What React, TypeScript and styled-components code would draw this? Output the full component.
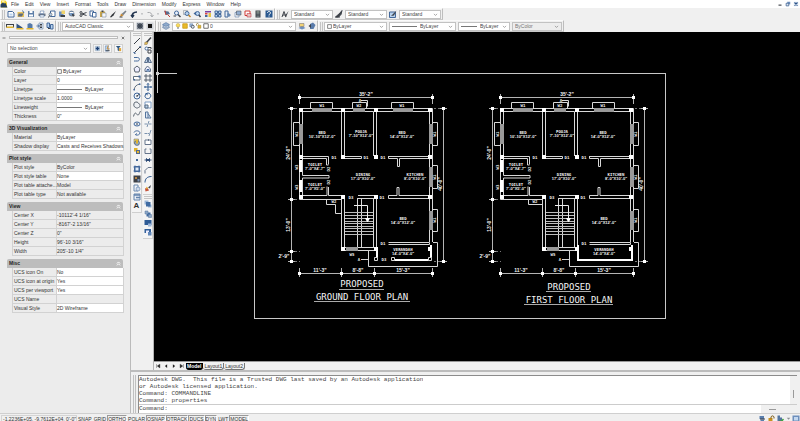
import React from 'react';
import styled, { createGlobalStyle, css } from 'styled-components';

const UI = "'Liberation Sans', 'Open Sans', sans-serif";
const MONO = "'Liberation Mono', 'DejaVu Sans Mono', monospace";

const Global = createGlobalStyle`
  * { box-sizing: border-box; }
  body { margin: 0; background: #f0f0f0; }
  button, select, input { font: inherit; color: inherit; margin: 0; padding: 0; border: 0; background: none; border-radius: 0; outline: none; }
`;

/* ---------- icons ---------- */

const B = '#44699b';
const D = '#3c4148';
const Y = '#e3b52f';
const L = '#b9d3ee';

const icons: Record<string, React.ReactNode> = {
  app: (<><path d="M2 1h9l3 4v10H2z" fill="#f0cf30" /><path d="M1 9l5-5 2 3 3-1 4 9H1z" fill="#28415f" /><path d="M4 2h5v3H4z" fill="#fff3a0" /></>),
  fresh: (<><path d="M2 3h9l3 3v8H2z" fill="#fff" stroke={B} strokeWidth="2" /><path d="M5 7h6v4H5z" fill={L} /></>),
  open: (<><path d="M1 4h13v10H1z" fill="#e9c35a" /><path d="M3 7h10l-3 6H2z" fill="#5f6d80" /><path d="M11 1l3 5" stroke={B} strokeWidth="2" /></>),
  save: (<><path d="M2 2h12v12H2z" fill="#5d7ea8" /><path d="M5 2h6v4H5zM4 9h8v4H4z" fill="#fff" /></>),
  print: (<><path d="M1 7h14v5H1z" fill="#707b8a" /><path d="M5 2h7l-1 5H4zM4 10h8v4H4z" fill="#fff" stroke={B} /></>),
  preview: (<><path d="M5 2h9v11H5z" fill="#fff" stroke={B} strokeWidth="2" /><circle cx="5" cy="9" r="3" fill={L} stroke={D} /><path d="M3 11l-2 4" stroke={D} strokeWidth="2" /></>),
  publish: (<><path d="M2 3h9v10H2z" fill="#6b8fbd" /><path d="M7 1h7v7H7z" fill="#f0d36a" /><path d="M5 10h9v4H5z" fill={D} /></>),
  globe: (<><circle cx="7" cy="7" r="5" fill="#7da1cc" stroke={D} /><path d="M7 7l7 3-4 4z" fill={D} /><path d="M3 5h8" stroke="#fff" strokeWidth="2" /></>),
  cut: (<><path d="M6 8L15 5M6 8l9 3" stroke={D} strokeWidth="2" /><circle cx="4" cy="5" r="2" fill="none" stroke={D} strokeWidth="2" /><circle cx="4" cy="11" r="2" fill="none" stroke={D} strokeWidth="2" /></>),
  copy: (<><path d="M2 2h7v10H2z" fill="#fff" stroke={B} strokeWidth="2" /><path d="M7 5h7v9H7z" fill="#fff" stroke={B} strokeWidth="2" /></>),
  paste: (<><path d="M2 3h10v11H2z" fill="#c9a548" /><path d="M5 1h4v3H5z" fill={D} /><path d="M6 6h8v8H6z" fill="#f6f7fa" stroke="#66768c" /></>),
  match: <path d="M2 14l4-5 8-7-5 9-5 4z" fill="#2f3237" />,
  brush: (<><path d="M13 1l2 2-7 8-3-3z" fill="#7a8088" /><path d="M2 14l2-7 5 4z" fill="#c98a32" /><path d="M1 14h6" stroke={D} strokeWidth="2" /></>),
  undo: <path d="M5 14C3 8 7 4 14 4M2 10l3 4 3-4" fill="none" stroke="#22344f" strokeWidth="3" />,
  redo: <path d="M3 5c6-1 9 2 9 7M9 10l3 4 3-4" fill="none" stroke="#a7a9ac" strokeWidth="2" />,
  drop: <path d="M4 6h8l-4 5z" fill="#8a8d92" />,
  pan: (<><path d="M2 2l4 8 8-2-3-5z" fill="#556f92" /><path d="M4 1l2 9M9 9l5 5" stroke="#c43d33" strokeWidth="2" /></>),
  zoom: (<><circle cx="7" cy="6" r="4" fill="#e8f0fa" stroke={B} strokeWidth="2" /><path d="M10 9l5 5" stroke={D} strokeWidth="3" /><path d="M1 12h5" stroke={D} strokeWidth="2" /></>),
  zoomWin: (<><path d="M1 1h8v8H1z" fill="none" stroke="#7a8088" /><circle cx="8" cy="7" r="4" fill={L} stroke={B} strokeWidth="2" /><path d="M11 10l4 4" stroke="#b98024" strokeWidth="3" /></>),
  zoomPrev: (<><circle cx="9" cy="7" r="4" fill={L} stroke={B} strokeWidth="2" /><path d="M12 10l3 4" stroke={D} strokeWidth="3" /><path d="M1 7l5-4v8z" fill={B} /></>),
  props: (<><path d="M2 2h12v3H2z" fill="#7b3fa0" /><path d="M2 6h5v3H2z" fill="#d84343" /><path d="M9 6h5v8H9z" fill="#e4c342" /><path d="M2 10h5v4H2z" fill={B} /></>),
  center: (<path d="M2 2h5v5H2zM9 2h5v5H9zM2 9h5v5H2zM9 9h5v5H9z" fill={L} stroke={B} strokeWidth="2" />),
  palette: (<><path d="M2 2h6v12H2z" fill="#e6edf6" stroke={B} strokeWidth="2" /><path d="M8 5l6 5-4 4-4-4z" fill="#6688b3" /></>),
  sheet: (<><path d="M2 5h8v9H2z" fill="#eef2f8" stroke={B} /><path d="M5 2h9v8H5z" fill="#93aed0" stroke={D} /></>),
  markup: (<><path d="M2 2h10v9H2z" fill="#fff" stroke="#d33b34" strokeWidth="2" /><path d="M6 7h8v7H6z" fill="#e7c2c0" stroke="#b23" /></>),
  calc: (<><path d="M3 1h10v14H3z" fill="#3e444c" /><path d="M5 3h6v2H5z" fill="#b5c6b4" /><path d="M5 7h6M5 10h6M5 13h6" stroke="#9aa" strokeWidth="1" /></>),
  help: (<><path d="M1 1h14v14H1z" fill="#2a588f" /><path d="M5 6c0-4 6-4 6 0 0 2-3 2-3 4M8 11v2" fill="none" stroke="#fff" strokeWidth="2" /></>),
  textstyle: (<><path d="M2 14L6 3l4 11M4 10h5" fill="none" stroke={D} strokeWidth="2" /><path d="M15 2l-4 10-3 3 1-5z" fill={D} /></>),
  dimstyle: <path d="M1 14h9M1 14l9-8 4-5-2 8-5 5z" fill={D} stroke={D} strokeWidth="2" />,
  tablestyle: (<><path d="M1 4h12v11H1z" fill={L} stroke={B} strokeWidth="2" /><path d="M15 1l-8 8-3 3 6-1z" fill={D} /></>),
  dist: (<><path d="M1 4v7M15 4v7M1 5h14" stroke={D} strokeWidth="2" /><path d="M1 9h14v3H1z" fill={Y} /></>),
  area: (<><path d="M1 13V3l12 8v2z" fill="#33547f" /><path d="M1 12h14v3H1z" fill={Y} /></>),
  region: (<><path d="M3 4l5-2 5 3v7H3z" fill="#5479a8" /><path d="M1 12h14v3H1z" fill={Y} /></>),
  list: (<><path d="M6 2h8v12H6z" fill="#e8eef6" stroke={B} /><path d="M8 5h4M8 8h4M8 11h4" stroke={D} strokeWidth="2" /><path d="M1 8h5M4 5l3 3-3 3" stroke={B} strokeWidth="2" fill="none" /></>),
  locate: (<><path d="M2 2h5v9H2zM9 5h5v9H9z" fill={L} stroke={B} strokeWidth="2" /><path d="M4 13h4" stroke={D} strokeWidth="2" /></>),
  gear: (<><path d="M1 1h14v14H1z" fill="#b7bdc6" /><circle cx="8" cy="8" r="4" fill="none" stroke="#3a4350" strokeWidth="3" /><path d="M3 3l10 10M13 3L3 13" stroke="#3a4350" strokeWidth="2" /></>),
  chip: (<><path d="M1 1h14v14H1z" fill="#d0d3d8" /><path d="M4 4h8v8H4z" fill="#141414" /></>),
  layers: (<><path d="M1 11l7-4 7 4-7 4z" fill="#b9c6d6" stroke={B} /><path d="M1 8l7-4 7 4-7 4z" fill="#d9e2ec" stroke={B} /><path d="M1 5l7-4 7 4-7 4z" fill="#8faacb" stroke={B} /></>),
  bulb: (<><circle cx="8" cy="6" r="5" fill="#f9dc5c" stroke="#a98a2c" /><path d="M6 11h4v4H6z" fill="#7a7f87" /></>),
  sun: (<path d="M2 2h12v12H2z" fill="#e8b928" stroke="#c99510" strokeWidth="2" />),
  freeze: (<><path d="M2 2h8v8H2z" fill="#9db7d8" stroke={B} /><circle cx="10" cy="10" r="4" fill="#dfe8f2" stroke={D} strokeWidth="2" /></>),
  lock: (<><path d="M1 7V3c2-3 5-2 6 1" fill="none" stroke="#8a6d1e" strokeWidth="2" /><path d="M5 6h8v8H5z" fill={Y} stroke="#8a6d1e" /></>),
  swatch: <path d="M2 2h12v12H2z" fill="#fff" stroke="#444" strokeWidth="2" />,
  layPrev: (<><path d="M1 12l7-4 7 4-7 3z" fill="#6f90bd" /><path d="M3 3h9v6H3z" fill="#f1d274" stroke="#667" /></>),
  layState: (<><path d="M4 4l6-3 5 5-4 8H4z" fill="#5a7cab" /><path d="M1 8l5-4v8z" fill={D} /></>),
  pick: (<><path d="M3 3h10v10H3z" fill={L} stroke="#89a" /><path d="M8 4v8M4 8h8" stroke="#1f3f70" strokeWidth="3" /></>),
  pickObj: (<><path d="M3 2h7v12H3z" fill={L} stroke={B} /><path d="M10 1l-3 8h6" fill="none" stroke="#d08a2a" strokeWidth="2" /><path d="M4 13h9" stroke={D} strokeWidth="2" /></>),
  quick: (<><path d="M2 2h11l-4 5v7l-3-2V7z" fill="#31577f" /><path d="M9 7h5v7H9z" fill="#e0a63a" /></>),
  line: <path d="M2 14L14 2" stroke={D} strokeWidth="2" />,
  xline: (<><path d="M2 14L14 2" stroke={D} strokeWidth="2" /><path d="M1 13h3v3M13 1h2v3" fill={D} stroke={B} strokeWidth="2" /></>),
  pline: <path d="M2 5h7c5 0 5 7 0 7H5M2 12h3" fill="none" stroke={B} strokeWidth="2" />,
  polygon: <path d="M8 2l6 5-2 7H4L2 7z" fill="#eef" stroke="#5a6470" strokeWidth="2" />,
  rect: (<><path d="M1 5h13v7H1z" fill="#fff" stroke="#62707f" strokeWidth="2" /><path d="M11 3h4v4h-4zM1 10h3v3H1z" fill={B} /></>),
  arc: (<><path d="M2 14C3 7 7 3 14 2" fill="none" stroke="#62707f" strokeWidth="2" /><path d="M1 12h3v3H1zM12 1h3v3h-3z" fill={B} /></>),
  circle: (<><circle cx="8" cy="8" r="6" fill="#eef3f9" stroke={B} strokeWidth="2" /><path d="M8 8l5-4M6 8h4" stroke={D} strokeWidth="2" /></>),
  cloud: <path d="M3 3c4-2 7-1 8 2 4 0 4 8 0 8-3 2-5 1-7-1-3 0-3-6-1-9z" fill="#eef0f3" stroke="#5a6470" strokeWidth="2" />,
  spline: <path d="M1 13c3-12 6-5 8-3s4-4 6-8" fill="none" stroke="#5a6470" strokeWidth="2" />,
  ellipse: (<><ellipse cx="8" cy="8" rx="6" ry="4" fill="#e7eef7" stroke={B} strokeWidth="2" /><path d="M6 8h4" stroke={D} strokeWidth="2" /></>),
  earc: <path d="M2 7c2-5 12-4 12 1 0 3-5 5-8 4M4 12l4-3" fill="none" stroke={B} strokeWidth="2" />,
  insert: (<><path d="M2 2h9v9H2z" fill="#e6d46f" stroke="#667" /><circle cx="8" cy="10" r="5" fill="#8fa9c8" stroke={D} /><path d="M6 4h4v7H6z" fill={Y} /></>),
  block: (<><path d="M2 2h7v7H2z" fill={Y} /><path d="M6 6h8v8H6z" fill="#55698a" /><path d="M8 8h4v4H8z" fill={Y} /></>),
  point: <path d="M6 6h4v4H6z" fill={B} />,
  hatch: (<><path d="M3 3h10v10H3z" fill="#e3ecf7" stroke={B} strokeWidth="2" /><path d="M1 4h14M1 12h14M4 1v14M12 1v14" stroke={B} strokeWidth="2" /></>),
  gradient: (<><path d="M1 1h14v14H1z" fill="#3d4046" /><path d="M4 4h4v4H4z" fill="#b98745" /><path d="M9 8h4v5H9z" fill="#7991b3" /></>),
  regionV: (<><path d="M2 2h8v12H2z" fill="#eef2f8" stroke="#6f8cb0" strokeWidth="2" /><circle cx="10" cy="10" r="4" fill="#cfdcec" stroke={B} /></>),
  table: (<><path d="M2 2h12v12H2z" fill="#e8eef6" stroke="#6484ad" strokeWidth="2" /><path d="M2 4h12M6 9h8" stroke="#6484ad" strokeWidth="3" /></>),
  erase: (<><path d="M14 1L5 11" stroke={D} strokeWidth="3" /><path d="M2 10l6 1-2 4H1z" fill="#e6bd54" stroke="#875" /></>),
  copyM: (<><circle cx="5" cy="5" r="3" fill="#fff" stroke={B} strokeWidth="2" /><path d="M8 8h6v6H8zM8 3h6v3" fill="#fff" stroke={D} strokeWidth="2" /></>),
  mirror: <path d="M7 2v11H1zM9 2v11h6z" fill="#c3d5ea" stroke="#5a6f8c" strokeWidth="2" />,
  offset: (<><path d="M2 13V8l5-6 6 6v5z" fill="#eef" stroke="#65748a" strokeWidth="2" /><path d="M6 13V9h4v4" fill={L} stroke={B} strokeWidth="2" /></>),
  array: <path d="M2 2h4v4H2zM10 2h4v4h-4zM2 10h4v4H2zM10 10h4v4h-4z" fill="#e4e9ef" stroke="#5a6470" strokeWidth="2" />,
  move: <path d="M8 1v14M1 8h14M6 3l2-2 2 2M6 13l2 2 2-2M3 6L1 8l2 2M13 6l2 2-2 2" fill="none" stroke="#2e588e" strokeWidth="2" />,
  rotate: (<><path d="M5 3c6-3 10 3 8 7s-9 5-11-1c0-2 1-4 2-5" fill="none" stroke="#2e588e" strokeWidth="2" /><path d="M2 2h5v5z" fill="#2e588e" /></>),
  scale: (<><path d="M2 2h12v12H2z" fill="#fff" stroke="#7d9cc4" strokeWidth="2" /><path d="M2 8h6v6H2z" fill={L} stroke="#5b6c80" strokeWidth="2" /></>),
  stretch: <path d="M3 2h5v12H3zM8 5l6 9H8" fill="#dfe8f3" stroke="#55749c" strokeWidth="2" />,
  trim: <path d="M1 8h5M10 8h5M6 14l4-12" fill="none" stroke="#7c93ae" strokeWidth="2" />,
  extend: <path d="M1 9h5M7 9h3M10 14l4-12" fill="none" stroke="#7c93ae" strokeWidth="2" />,
  breakPt: <path d="M2 4h12v9H2zM9 2v4" fill="#fff" stroke="#65748a" strokeWidth="2" />,
  brk: <path d="M5 4H2v9h12V4h-3" fill="none" stroke="#65748a" strokeWidth="2" />,
  join: <path d="M1 8h14M5 5l3 3-3 3zM11 5L8 8l3 3z" fill="#2c4a75" stroke="#2c4a75" strokeWidth="2" />,
  chamfer: <path d="M2 15V9l6-6h7" fill="none" stroke="#65748a" strokeWidth="2" />,
  fillet: <path d="M2 15c0-8 5-12 13-12" fill="none" stroke="#2e588e" strokeWidth="2" />,
  explode: (<><path d="M2 9l5-2 3 6-7 2z" fill="#c5533a" /><path d="M8 7l6-5-2 7z" fill={D} /><path d="M5 5l3 4-4 1z" fill={Y} /></>),
  front: (<><path d="M1 1h8v8H1zM8 9h7v6H8z" fill="#9bb6d6" /><path d="M4 4h9v9H4z" fill="#3f6ba2" /></>),
  back: (<><path d="M5 5h8v8H5z" fill="#3f6ba2" /><path d="M2 2h6v6H2zM9 9h6v6H9z" fill="#8fa9c8" stroke="#56759c" /></>),
  above: (<><path d="M1 2h14v10H1z" fill="#2f5c96" /><path d="M8 9h7v6H8z" fill="#9db7d8" /></>),
  under: (<><path d="M1 2h13v8H1z" fill="#34619a" /><path d="M4 5h6v5H4z" fill="#eef" /><path d="M8 8h7v7H8z" fill="#5f86b8" /></>),
  comm: (<><path d="M3 2h9v6H3zM5 9h7v5H5z" fill="#5a7fae" /><path d="M4 8h10" stroke={D} strokeWidth="2" /></>),
  unlock: (<><path d="M3 6h8v8H3z" fill="#c9911f" /><path d="M8 7V4c1-3 5-3 6 0v3" fill="none" stroke="#7a5b18" strokeWidth="2" /></>),
  trusted: (<><path d="M3 1h5v12H3zM8 5h4v8H8z" fill="#54759f" /><path d="M7 11l3 3 5-6" fill="none" stroke="#3da23a" strokeWidth="3" /></>),
  clean: (<><path d="M1 1h14v14H1z" fill="#6d8fbc" /><path d="M4 4h8v7H4z" fill="#c3d7ef" /></>),
  min: <path d="M4 11h8" stroke={D} strokeWidth="3" />,
  restore: (<><path d="M6 2h8v7H6z" fill="#6d8fbc" /><path d="M3 6h7v7H3z" fill="#dfe8f3" stroke="#3a5f90" strokeWidth="2" /></>),
  close: (<><path d="M2 2h12v12H2z" fill="#dbe6f2" /><path d="M4 4l8 8M12 4l-8 8" stroke="#2c5288" strokeWidth="3" /></>),
  x: <path d="M3 3l10 10M13 3L3 13" stroke="#555" strokeWidth="3" />,
  dash: <path d="M2 8h12" stroke="#555" strokeWidth="3" />,
  chevron: <path d="M3 6l5 5 5-5" fill="none" stroke="#777" strokeWidth="2" />,
  collapse: <path d="M3 8l5-5 5 5M3 14l5-5 5 5" fill="none" stroke="#fff" strokeWidth="3" />,
  first: <path d="M4 3v10M13 3v10L6 8z" fill="#222" stroke="#222" />,
  prev: <path d="M11 3v10L5 8z" fill="#222" />,
  next: <path d="M5 3v10l6-5z" fill="#222" />,
  last: <path d="M12 3v10M3 3v10l7-5z" fill="#222" stroke="#222" />,
};

const Svg = styled.svg<{ $s?: number }>`
  display: block;
  flex: none;
  width: ${p => p.$s ?? 8}px;
  height: ${p => p.$s ?? 8}px;
`;
const Icon = ({ name, size }: { name: string; size?: number }) => (
  <Svg viewBox="0 0 16 16" $s={size} aria-hidden="true">{icons[name]}</Svg>
);

/* ---------- frame ---------- */

const Shell = styled.div`
  min-height: 100vh;
  display: flex;
  flex-direction: column;
  background: #f0f0f0;
  font: 5px/8px ${UI};
  color: #333;
`;
const MenuBar = styled.nav`
  display: flex;
  align-items: center;
  height: 8px;
  padding-right: 1px;
  background: #fff;
  white-space: nowrap;
`;
const MenuLink = styled.button`padding: 0 3px; line-height: 8px;`;
const Spacer = styled.div`flex: 1;`;
const WindowButtons = styled.div`display: flex; gap: 2px; button { width: 6px; }`;

const ToolRow = styled.div`
  display: flex;
  height: 12px;
  align-items: stretch;
`;
const Bar = styled.div<{ $gap?: number }>`
  display: flex;
  align-items: center;
  gap: ${p => p.$gap ?? 2}px;
  padding: 0 1px;
  border: 1px solid #fafafa;
  border-right-color: #bdbdbd;
  border-bottom-color: #c8c8c8;
`;
const Grip = styled.div<{ $flat?: boolean }>`
  flex: none;
  ${p => p.$flat
    ? css`height: 3px; width: 8px; border-top: 1px solid #c4c4c4; border-bottom: 1px solid #c4c4c4;`
    : css`width: 3px; height: 9px; margin-right: -1px; border-left: 1px solid #c4c4c4; border-right: 1px solid #c4c4c4;`}
`;
const Group = styled.div`display: flex; gap: 2px;`;
const ToolButton = styled.button`display: block; flex: none;`;

const Combo = styled.label<{ $w: number; $muted?: boolean }>`
  display: flex;
  align-items: center;
  width: ${p => p.$w}px;
  height: 9px;
  padding: 0 2px;
  gap: 1px;
  background: ${p => (p.$muted ? '#ededed' : '#fff')};
  border: 1px solid #c2c2c2;
  color: ${p => (p.$muted ? '#777' : '#444')};
  select { flex: 1; min-width: 0; height: 7px; line-height: 7px; appearance: none; }
`;
const Stroke = styled.i<{ $w: number }>`
  flex: none;
  width: ${p => p.$w}px;
  height: 1px;
  margin-right: 2px;
  background: #777;
`;

const Select = ({ label, value, width, muted, children }: { label: string; value: string; width: number; muted?: boolean; children?: React.ReactNode }) => (
  <Combo $w={width} $muted={muted}>
    {children}
    <select aria-label={label} defaultValue={value}><option>{value}</option></select>
    <Icon name="chevron" size={5} />
  </Combo>
);
const Tool = ({ name, size }: { name: string; size?: number }) => (
  <ToolButton type="button" aria-label={name}><Icon name={name} size={size} /></ToolButton>
);
const Tools = ({ names }: { names: string[] }) => (
  <Group>{names.map((n, i) => <Tool key={i} name={n} size={n === 'drop' ? 4 : 8} />)}</Group>
);

const Body = styled.div`
  flex: 1;
  display: flex;
  min-height: 0;
`;

/* ---------- properties palette ---------- */

const Palette = styled.aside`
  flex: none;
  width: 131px;
  padding: 4px 7px 0;
  border-right: 1px solid #bbb;
  background: #ececec;
`;
const PaletteTitle = styled.div`
  display: flex;
  align-items: center;
  gap: 3px;
  height: 3px;
  margin: 0 -2px 0 -5px;
`;
const PaletteGrip = styled.div`
  flex: 1;
  height: 3px;
  border: 1px solid #bdbdbd;
  background: #fafafa;
`;
const PickRow = styled.div`
  display: flex;
  align-items: center;
  justify-content: space-between;
  margin: 4px 0 5px;
  label { height: 10px; }
`;
const PickButton = styled.button`
  padding: 0;
  border: 1px solid #d2d2d2;
  background: #f6f6f6;
`;
const Section = styled.section`margin-bottom: 3px;`;
const SectionTitle = styled.h2`
  display: flex;
  align-items: center;
  justify-content: space-between;
  height: 9px;
  margin: 0;
  padding: 0 2px;
  border-radius: 2px 2px 0 0;
  background: #bdbdbd;
  font: bold 5px/9px ${UI};
  color: #222;
`;
const Grid = styled.table`
  width: calc(100% - 4px);
  margin-left: 5px;
  border-spacing: 0;
  table-layout: fixed;
  th, td {
    height: 9px;
    padding: 0 0 0 1px;
    border: solid #d2d2d2;
    border-width: 0 1px 1px 0;
    font-weight: normal;
    text-align: left;
    line-height: 8px;
    white-space: nowrap;
  }
  td { padding: 0; }
  th { width: 45px; border-left-width: 1px; }
`;
const Value = styled.td<{ $ro?: boolean }>`background: ${p => (p.$ro ? 'transparent' : '#fff')};`;
const Inline = styled.span`display: flex; align-items: center; gap: 1px;`;

type Row = [string, string, ('ro' | 'box' | 'line')?];
const sections: [string, Row[]][] = [
  ['General', [['Color', 'ByLayer', 'box'], ['Layer', '0'], ['Linetype', 'ByLayer', 'line'], ['Linetype scale', '1.0000'], ['Lineweight', 'ByLayer', 'line'], ['Thickness', '0"']]],
  ['3D Visualization', [['Material', 'ByLayer'], ['Shadow display', 'Casts and Receives Shadows']]],
  ['Plot style', [['Plot style', 'ByColor', 'ro'], ['Plot style table', 'None'], ['Plot table attache...', 'Model', 'ro'], ['Plot table type', 'Not available', 'ro']]],
  ['View', [['Center X', '-10112\'-4 1/16"', 'ro'], ['Center Y', '-8167\'-2 13/16"', 'ro'], ['Center Z', '0"', 'ro'], ['Height', '96\'-10 3/16"', 'ro'], ['Width', '205\'-10 1/4"', 'ro']]],
  ['Misc', [['UCS icon On', 'No'], ['UCS icon at origin', 'Yes'], ['UCS per viewport', 'Yes'], ['UCS Name', '', 'ro'], ['Visual Style', '2D Wireframe']]],
];

const Properties = () => (
  <Palette>
    <PaletteTitle><Icon name="dash" size={4} /><PaletteGrip /><Tool name="x" size={4} /></PaletteTitle>
    <PickRow>
      <Select label="Selection" value="No selection" width={84} />
      {['pick', 'pickObj', 'quick'].map(n => <PickButton key={n} type="button" aria-label={n}><Icon name={n} size={7} /></PickButton>)}
    </PickRow>
    {sections.map(([title, rows]) => (
      <Section key={title}>
        <SectionTitle>{title}<Icon name="collapse" size={5} /></SectionTitle>
        <Grid>
          <tbody>
            {rows.map(([k, v, kind]) => (
              <tr key={k}>
                <th scope="row">{k}</th>
                <Value $ro={kind === 'ro'}>
                  <Inline>
                    {kind === 'box' && <Icon name="swatch" size={5} />}
                    {kind === 'line' && <Stroke $w={25} />}
                    {v}
                  </Inline>
                </Value>
              </tr>
            ))}
          </tbody>
        </Grid>
      </Section>
    ))}
  </Palette>
);

/* ---------- side toolbars ---------- */

const SideBars = styled.div`
  display: flex;
  align-items: flex-start;
  flex: none;
  width: 23px;
  gap: 1px;
  padding-left: 1px;
  border-right: 1px solid #b5b5b5;
`;
const SideBar = styled.div<{ $h: number }>`
  display: flex;
  flex-direction: column;
  align-items: center;
  justify-content: space-between;
  width: 10px;
  height: ${p => p.$h}px;
  padding: 1px 0 2px;
  border: solid #cfcfcf;
  border-width: 0 1px 1px 0;
  background: #f4f4f4;
`;
const Stack = styled.div`display: flex; flex-direction: column;`;
const LetterTool = styled.button`font: bold 8px/8px 'Liberation Sans', sans-serif; color: #333;`;

const drawTools = ['line', 'xline', 'pline', 'polygon', 'rect', 'arc', 'circle', 'cloud', 'spline', 'ellipse', 'earc', 'insert', 'block', 'point', 'hatch', 'gradient', 'regionV', 'table'];
const modifyTools = ['erase', 'copyM', 'mirror', 'offset', 'array', 'move', 'rotate', 'scale', 'stretch', 'trim', 'extend', 'breakPt', 'brk', 'join', 'chamfer', 'fillet', 'explode'];

/* ---------- drawing ---------- */

const Work = styled.main`
  flex: 1;
  min-width: 0;
  display: flex;
  flex-direction: column;
`;
const WorkTop = styled.div`flex: 1; display: flex; min-height: 0;`;
const Model = styled.div`flex: 1; min-width: 0; display: flex; flex-direction: column;`;
const Canvas = styled.svg`
  display: block;
  flex: 1;
  min-height: 0;
  width: 100%;
  background: #000;
`;
const CadText = styled.text`
  font: bold 4px 'DejaVu Sans Mono', monospace;
  fill: #f4f4f4;
  text-anchor: middle;
`;
const Caption = styled(CadText)`font: 9px 'DejaVu Sans Mono', monospace;`;
const RoomSize = styled(CadText)`font: bold 4px 'Liberation Sans', sans-serif;`;
const Measure = styled(CadText)`font: bold 5px 'Liberation Sans', sans-serif;`;

const rooms: [number, number, string, string][] = [
  [322, 134, 'BED', '10\'-10"X12\'-0"'],
  [361, 133, 'POOJA', '7\'-10"X12\'-0"'],
  [402, 134, 'BED', '14\'-0"X12\'-0"'],
  [315, 166, 'TOILET', '7\'-0"X4\'-7"'],
  [315, 186, 'TOILET', '7\'-0"X5\'-0"'],
  [363, 176, 'DINING', '17\'-0"X10\'-0"'],
  [415, 176, 'KITCHEN', '8\'-0"X10\'-0"'],
  [403, 220, 'BED', '14\'-0"X12\'-0"'],
  [403, 251, 'VERANDAH', '14\'-0"X4\'-0"'],
];
const tags: [number, number, string, boolean?][] = [
  [322, 107, 'W1'], [359, 107, 'W2'], [402, 107, 'W1'], [334, 159, 'D1'], [366, 159, 'D1'], [383, 159, 'D1'],
  [351, 199, 'D3'], [382, 199, 'D1'], [383, 245, 'D1'], [352, 256, 'W5'], [334, 203, 'W2'],
  [298, 134, 'W1', true], [298, 167, 'W3', true], [298, 187, 'W3', true], [330, 169, 'D2', true], [330, 182, 'D2', true],
  [436, 134, 'W1', true], [436, 177, 'W1', true], [436, 220, 'W1', true],
];
const columns = [
  [301, 110], [343, 110], [376, 110], [430, 110], [301, 157], [343, 157], [376, 157], [430, 157],
  [301, 197], [343, 197], [376, 197], [430, 197], [343, 249], [376, 249], [430, 249],
];

const FloorPlan = ({ ground }: { ground?: boolean }) => (
  <g fill="none" stroke="#d8d8d8">
    {/* dimension lines */}
    <path stroke="#b4b4b4" d="M299 97.5h133M299.5 94v10M432.5 94v10M291.5 107v155M443.5 107v155M288 108.5h7M288 199.5h7M288 251.5h7M288 261.5h7M440 108.5h7M440 261.5h7M299 273.5h134M299.5 268v9M341.5 268v9M374.5 268v9M432.5 268v9" />
    <path stroke="#777" strokeDasharray="2 2" d="M295 108.5h5M295 199.5h5M295 251.5h5M295 261.5h5M434 108.5h6M434 261.5h6" />
    <path fill="#fff" stroke="none" d="M298 96h3v3h-3zM431 96h3v3h-3zM290 107h3v3h-3zM290 198h3v3h-3zM290 250h3v3h-3zM290 260h3v3h-3zM442 107h3v3h-3zM442 260h3v3h-3zM298 272h3v3h-3zM340 272h3v3h-3zM373 272h3v3h-3zM431 272h3v3h-3z" />
    {/* outer and inner walls */}
    <path d="M299.5 199V108.5H432.5V242M302.5 156V111.5H341.5V156M344.5 156V111.5H373.5V156M376.5 156V111.5H429.5V156" />
    <path d="M302 156.5h26.500v8M302 158.500h24.500v6.500h2M344 156.500h17.500v2h-17.500M388 156.500h41M388.500 156.500v2h9v8h2v-8h30M429.500 158v37" />
    <path d="M302.5 158v17.500h26.500v2.500h-26.500v17.500h24.500v-9M328.500 187v8.500h13M299.500 199.500h42" />
    <path d="M358 195.500h16M358 198.500h16M429 195.500h-30v-8h-2v8h-8.500v3h41v43.500M388.500 242.500h41M388.500 244.500h41v-2M374.500 158v-2" />
    {/* stair well */}
    <path d="M341.500 199v48M344.500 195.500v51.500M357.500 198v49M361.500 198v49M373.500 199v48M376.500 199v60M344 247.500h30M344 250.500h30" />
    <path stroke="#bdbdbd" d="M345 212.500h28M345 215.500h28M345 218.500h28M345 221.500h28M345 223.500h28M345 226.500h28M345 228.500h28M345 231.500h28M345 234.500h28" />
    <path stroke="#eee" d="M354 205.500h13.500v15" />
    <path fill="#fff" stroke="none" d="M365 218h5l-2 4h-1z" />
    {ground
      ? <path d="M326.500 199v5.500h9v9h6" />
      : <path d="M327.500 199v5.500h14" />}
    {/* window sills */}
    <path d="M310.500 108v-5.500h22V108M352.500 108v-5.500h14V108M391.500 108v-5.500h22V108M299 122.500h-5.500v23H299M433 122.500h4.500v23H433M433 165.500h4.500v23H433M433 209.500h4.500v22H433" />
    <path fill="#999" stroke="none" d="M312 108h20v4h-20zM353 108h12v4h-12zM393 108h20v4h-20zM299 124h4v20h-4zM429 124h4v20h-4zM429 167h4v20h-4zM429 211h4v19h-4zM346 247h12v4h-12z" />
    <path fill="#fff" stroke="none" d="M299 160h3v12h-3zM299 180h3v12h-3z" />
    {/* verandah */}
    <path d="M433 242.500h4.500v24h-69v-16M361 259.500h7" />
    <path stroke="#fff" strokeWidth="2" d={ground ? 'M394 260h36M431 245v14M377 251v8' : 'M377 245v15h54v-15'} />
    {ground && <path fill="#000" d="M374.500 257.500h3v3h-3zM391.500 257.500h3v3h-3zM428.500 257.500h3v3h-3z" />}
    <path d="M361 100.500h6.500v6" />
    <g fill="#fff" stroke="none">
      {columns.map(([x, y]) => <rect key={`${x}-${y}`} x={x - 2} y={y - 2} width="4" height="4" />)}
    </g>
    <g stroke="none">
      {rooms.map(([x, y, name, size], i) => (
        <React.Fragment key={i}>
          <CadText x={x} y={y}>{name}</CadText>
          <RoomSize x={x} y={y + 4}>{size}</RoomSize>
        </React.Fragment>
      ))}
      {tags.map(([x, y, t, up], i) => <CadText key={i} x={x} y={y} transform={up ? `rotate(-90 ${x} ${y})` : undefined}>{t}</CadText>)}
      {ground && <CadText x="384" y="261">D3</CadText>}
      <CadText x="360" y="102">A</CadText>
      <CadText x="359" y="261">A</CadText>
      <Measure x="366" y="96">35'-2"</Measure>
      <Measure x="320" y="272">11'-3"</Measure>
      <Measure x="358" y="272">8'-8"</Measure>
      <Measure x="403" y="272">15'-3"</Measure>
      <Measure x="284" y="258">2'-9"</Measure>
      <Measure x="290" y="153" transform="rotate(-90 290 153)">24'-0"</Measure>
      <Measure x="290" y="225" transform="rotate(-90 290 225)">13'-0"</Measure>
      <Measure x="442" y="184" transform="rotate(-90 442 184)">40'-0"</Measure>
    </g>
  </g>
);

const Drawing = () => (
  <Canvas viewBox="154 32 646 329" role="img" aria-label="Floor plans">
    <rect x="254.500" y="73.500" width="411" height="245" fill="none" stroke="#c8c8c8" />
    <FloorPlan ground />
    <g transform="translate(201 0)"><FloorPlan /></g>
    <Caption x="362" y="287">PROPOSED</Caption>
    <Caption x="362" y="300">GROUND FLOOR PLAN</Caption>
    <Caption x="569" y="290">PROPOSED</Caption>
    <Caption x="569" y="303">FIRST FLOOR PLAN</Caption>
    <path stroke="#aaa" d="M339 289.500h45M314 301.500h96M546 291.500h45M524 304.500h89" />
    <path stroke="#ccc" d="M157.500 53v40M157 73.500h20" />
    <rect x="156" y="72" width="3" height="3" fill="#ccc" />
  </Canvas>
);

/* ---------- layout tabs, command line, status ---------- */

const Tabs = styled.div`
  display: flex;
  align-items: center;
  height: 9px;
  padding-left: 1px;
  background: #f2f2f2;
  border-top: 1px solid #999;
`;
const NavButtons = styled.div`display: flex; gap: 2px; margin-right: 1px;`;
const Tab = styled.button<{ $on?: boolean }>`
  height: 7px;
  padding: 0 1px;
  line-height: 7px;
  border-right: 1px solid #777;
  border-bottom: 1px solid #777;
  border-radius: 0 0 3px 3px;
  ${p => p.$on && css`background: #000; color: #fff; font-weight: bold; border-color: #000;`}
`;
const Command = styled.section`
  display: flex;
  gap: 2px;
  padding: 3px 3px 0 2px;
  border-top: 2px solid #bcbcbc;
`;
const CommandGrip = styled.div`width: 3px; border: solid #c0c0c0; border-width: 0 1px;`;
const CommandBox = styled.div`
  flex: 1;
  min-width: 0;
  border: solid #8c8c8c;
  border-width: 1px 0 0 1px;
  background: #fff;
  font: 6px/7px ${MONO};
  color: #444;
`;
const History = styled.div`display: flex; justify-content: space-between; border-bottom: 1px solid #ccc;`;
const Log = styled.pre`margin: 0; font: inherit; min-width: 0; overflow: hidden;`;
const Scroll = styled.div<{ $flat?: boolean }>`
  display: flex;
  justify-content: center;
  align-items: center;
  background: #f0f0f0;
  ${p => (p.$flat ? css`width: 36px; padding-right: 14px;` : css`width: 7px; padding-top: 8px;`)}
  &::before { content: ''; background: #9a9a9a; ${p => (p.$flat ? css`width: 7px; height: 1px;` : css`width: 1px; height: 8px;`)} }
`;
const Prompt = styled.div`
  display: flex;
  height: 8px;
  line-height: 8px;
  label { flex: 1; display: flex; }
  input { flex: 1; min-width: 0; height: 8px; }
`;

const Status = styled.footer`
  display: flex;
  align-items: center;
  height: 10px;
  padding: 1px 0 1px 1px;
  border-top: 1px solid #cfcfcf;
  white-space: nowrap;
`;
const Coords = styled.div`
  width: 76px;
  height: 8px;
  padding-left: 1px;
  border: 1px solid #d4d4d4;
  line-height: 7px;
`;
const Toggle = styled.button<{ $on?: boolean }>`
  height: 8px;
  line-height: 7px;
  border: 1px solid ${p => (p.$on ? '#9a9a9a' : 'transparent')};
  border-right-color: ${p => (p.$on ? '#fff' : 'transparent')};
  border-bottom-color: ${p => (p.$on ? '#fff' : 'transparent')};
`;
const Tray = styled.div`display: flex; align-items: center; gap: 1px; margin-right: 1px;`;

const toggles: [string, boolean][] = [['SNAP', false], ['GRID', false], ['ORTHO', true], ['POLAR', false], ['OSNAP', true], ['OTRACK', true], ['DUCS', true], ['DYN', true], ['LWT', false], ['MODEL', true]];

export default function App() {
  return (
    <Shell>
      <Global />
      <MenuBar aria-label="Main menu">
        <Tool name="app" size={8} />
        {['File', 'Edit', 'View', 'Insert', 'Format', 'Tools', 'Draw', 'Dimension', 'Modify', 'Express', 'Window', 'Help'].map(m => <MenuLink type="button" key={m}>{m}</MenuLink>)}
        <Spacer />
        <WindowButtons><Tool name="min" size={6} /><Tool name="restore" size={6} /><Tool name="close" size={6} /></WindowButtons>
      </MenuBar>

      <ToolRow>
        <Bar $gap={3}>
          <Grip />
          <Tools names={['fresh', 'open', 'save']} />
          <Tools names={['print', 'preview', 'publish', 'globe']} />
          <Tools names={['cut', 'copy', 'paste', 'match', 'brush']} />
          <Tools names={['undo', 'drop', 'redo', 'drop']} />
          <Tools names={['pan', 'zoom', 'zoomWin', 'zoomPrev']} />
          <Tools names={['props', 'center', 'palette', 'sheet', 'markup', 'calc']} />
          <Tools names={['help']} />
        </Bar>
        <Bar>
          <Grip />
          <Tool name="textstyle" /><Select label="Text style" value="Standard" width={42} />
          <Tool name="dimstyle" /><Select label="Dimension style" value="Standard" width={42} />
          <Tool name="tablestyle" /><Select label="Table style" value="Standard" width={42} />
        </Bar>
      </ToolRow>
      <ToolRow>
        <Bar>
          <Grip />
          <Tools names={['dist', 'area', 'region']} />
          <Tools names={['list', 'locate']} />
        </Bar>
        <Bar>
          <Grip />
          <Select label="Workspace" value="AutoCAD Classic" width={72} />
          <Tools names={['gear', 'chip']} />
        </Bar>
        <Bar>
          <Grip />
          <Tool name="layers" />
          <Select label="Layer" value="0" width={124}>
            <Icon name="bulb" size={6} /><Icon name="sun" size={6} /><Icon name="freeze" size={6} /><Icon name="lock" size={6} /><Icon name="swatch" size={6} />
          </Select>
          <Tools names={['layPrev', 'layState']} />
        </Bar>
        <Bar>
          <Grip />
          <Select label="Color" value="ByLayer" width={63}><Icon name="swatch" size={5} /></Select>
          <Select label="Linetype" value="ByLayer" width={67}><Stroke $w={25} /></Select>
          <Select label="Lineweight" value="ByLayer" width={52}><Stroke $w={16} /></Select>
          <Select label="Plot style" value="ByColor" width={50} muted />
        </Bar>
      </ToolRow>

      <Body>
        <Properties />
        <Work>
          <WorkTop>
            <SideBars>
              <SideBar $h={181}>
                <Grip $flat />
                {drawTools.map(n => <Tool key={n} name={n} />)}
                <LetterTool type="button">A</LetterTool>
              </SideBar>
              <Stack>
                <SideBar $h={163}>
                  <Grip $flat />
                  {modifyTools.map(n => <Tool key={n} name={n} />)}
                </SideBar>
                <SideBar $h={44}>
                  <Grip $flat />
                  {['front', 'back', 'above', 'under'].map(n => <Tool key={n} name={n} />)}
                </SideBar>
              </Stack>
            </SideBars>
            <Model>
              <Drawing />
              <Tabs>
                <NavButtons>{['first', 'prev', 'next', 'last'].map(n => <Tool key={n} name={n} size={6} />)}</NavButtons>
                <Tab type="button" $on>Model</Tab><Tab type="button">Layout1</Tab><Tab type="button">Layout2</Tab>
              </Tabs>
            </Model>
          </WorkTop>
          <Command aria-label="Command line">
            <CommandGrip />
            <CommandBox>
              <History>
                <Log>{'Autodesk DWG.  This file is a Trusted DWG last saved by an Autodesk application\nor Autodesk licensed application.\nCommand: COMMANDLINE\nCommand: properties'}</Log>
                <Scroll />
              </History>
              <Prompt><label>Command:<input type="text" /></label><Scroll $flat /></Prompt>
            </CommandBox>
          </Command>
        </Work>
      </Body>

      <Status>
        <Coords>-1.2236E+05, -9.7612E+04, 0'-0"</Coords>
        {toggles.map(([t, on]) => <Toggle type="button" key={t} $on={on} aria-pressed={on}>{t}</Toggle>)}
        <Spacer />
        <Tray><Tool name="comm" /><Tool name="unlock" /><Tool name="trusted" /></Tray>
        <Tool name="drop" size={7} />
        <Tool name="clean" />
      </Status>
    </Shell>
  );
}
